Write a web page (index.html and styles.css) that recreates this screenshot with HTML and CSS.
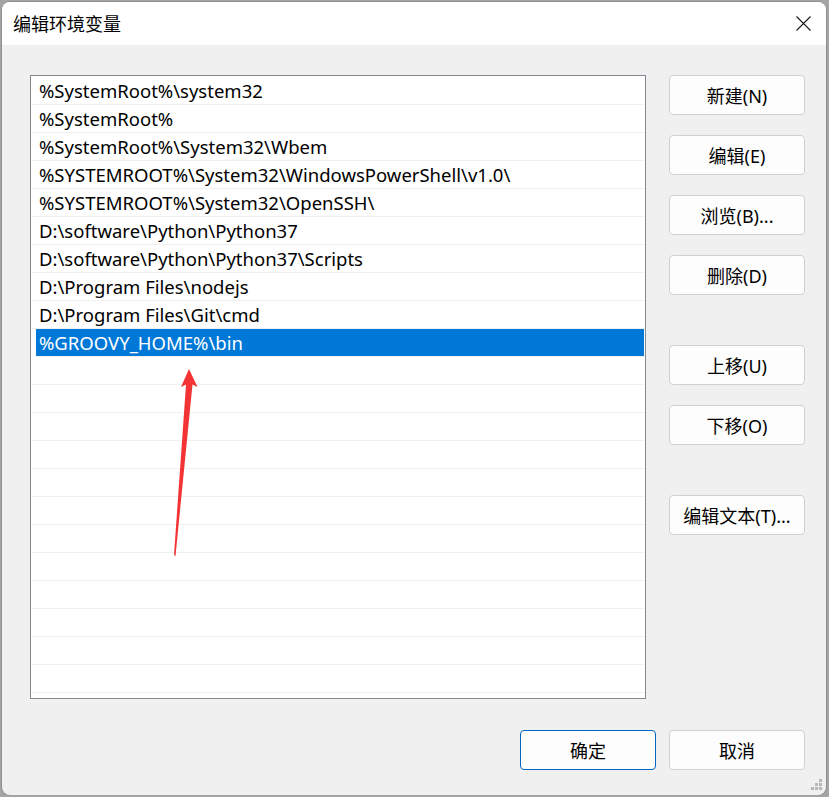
FILE: index.html
```html
<!DOCTYPE html>
<html lang="zh-CN">
<head>
    <meta charset="UTF-8">
    <title>编辑环境变量</title>
    <link rel="stylesheet" href="styles.css">
</head>
<body>
    <div class="window">
        <div class="titlebar">
            <span class="title">编辑环境变量</span>
            <button class="close-btn" aria-label="关闭">
                <svg width="15" height="15" viewBox="0 0 15 15">
                    <path d="M0.5 0.5 L14.5 14.5 M14.5 0.5 L0.5 14.5" stroke="#1a1a1a" stroke-width="1.1" fill="none"/>
                </svg>
            </button>
        </div>

        <div class="content">
            <div class="main">
                <div class="path-list">
                    <div class="row">%SystemRoot%\system32</div>
                    <div class="row">%SystemRoot%</div>
                    <div class="row">%SystemRoot%\System32\Wbem</div>
                    <div class="row">%SYSTEMROOT%\System32\WindowsPowerShell\v1.0\</div>
                    <div class="row">%SYSTEMROOT%\System32\OpenSSH\</div>
                    <div class="row">D:\software\Python\Python37</div>
                    <div class="row">D:\software\Python\Python37\Scripts</div>
                    <div class="row">D:\Program Files\nodejs</div>
                    <div class="row">D:\Program Files\Git\cmd</div>
                    <div class="row selected">%GROOVY_HOME%\bin</div>
                    <div class="row"></div>
                    <div class="row"></div>
                    <div class="row"></div>
                    <div class="row"></div>
                    <div class="row"></div>
                    <div class="row"></div>
                    <div class="row"></div>
                    <div class="row"></div>
                    <div class="row"></div>
                    <div class="row"></div>
                    <div class="row"></div>
                    <div class="row"></div>
                </div>

                <div class="side-buttons">
                    <button class="btn">新建(N)</button>
                    <button class="btn">编辑(E)</button>
                    <button class="btn">浏览(B)...</button>
                    <button class="btn">删除(D)</button>
                    <button class="btn group-start">上移(U)</button>
                    <button class="btn">下移(O)</button>
                    <button class="btn group-start">编辑文本(T)...</button>
                </div>
            </div>

            <div class="footer">
                <button class="btn btn-default">确定</button>
                <button class="btn">取消</button>
            </div>
        </div>

        <!-- red annotation arrow drawn over the list -->
        <svg class="arrow" width="824" height="793" viewBox="0 0 824 793">
            <polygon points="187,367 195.5,385 190.5,382.5 173.5,554 172,553 184,382.5 179,385" fill="#f43434"/>
        </svg>

        <svg class="grip" width="14" height="14" viewBox="0 0 14 14">
            <rect x="9" y="0" width="3" height="3" fill="#b8b8b8"/>
            <rect x="5" y="4" width="3" height="3" fill="#b8b8b8"/>
            <rect x="9" y="4" width="3" height="3" fill="#b8b8b8"/>
            <rect x="1" y="8" width="3" height="3" fill="#b8b8b8"/>
            <rect x="5" y="8" width="3" height="3" fill="#b8b8b8"/>
            <rect x="9" y="8" width="3" height="3" fill="#b8b8b8"/>
        </svg>
    </div>
</body>
</html>
```

FILE: styles.css
```css
body {
    margin: 0;
    background-color: #a4a4a4;
    font-family: "Noto Sans", "Noto Sans CJK SC", sans-serif;
    overflow: hidden;
}
.window {
    position: relative;
    margin: 2px 0 0 2px;
    width: 824px;
    height: 793px;
    background-color: #f0f0f0;
    border-radius: 8px;
    overflow: hidden;
    box-shadow: 0 0 0 1px rgba(0,0,0,0.12);
}
.titlebar {
    display: flex;
    align-items: center;
    height: 43px;
    background-color: #ffffff;
    padding-left: 11px;
}
.title {
    font-size: 18px;
    color: #000;
    margin-top: -2px;
}
.close-btn {
    margin-left: auto;
    width: 46px;
    height: 43px;
    border: none;
    background: transparent;
    display: flex;
    align-items: center;
    justify-content: center;
    padding: 0;
}
.content {
    padding: 30px 21px 25px 28px;
}
.main {
    display: flex;
    gap: 23px;
}
.path-list {
    width: 616px;
    height: 624px;
    box-sizing: border-box;
    border: 1px solid #828790;
    background-color: #fff;
    padding-top: 1px;
    overflow: hidden;
}
.row {
    height: 27px;
    line-height: 27px;
    margin: 0 1px;
    padding-left: 7px;
    border-bottom: 1px solid #f0f0f0;
    font-size: 18.5px;
    color: #000;
    white-space: nowrap;
}
.row.selected {
    margin-left: 5px;
    padding-left: 3px;
    background-color: #0078d7;
    color: #fff;
}
.side-buttons {
    display: flex;
    flex-direction: column;
    gap: 20px;
}
.btn {
    width: 136px;
    height: 40px;
    box-sizing: border-box;
    border: 1px solid #d0d0d0;
    border-radius: 4px;
    background-color: #fdfdfd;
    font-family: inherit;
    font-size: 18px;
    color: #000;
    padding: 0;
}
.group-start {
    margin-top: 30px;
}
.btn-default {
    border-color: #0067c0;
}
.footer {
    display: flex;
    justify-content: flex-end;
    gap: 13px;
    margin-top: 31px;
}
.arrow {
    position: absolute;
    left: 0;
    top: 0;
    pointer-events: none;
}
.grip {
    position: absolute;
    right: 2px;
    bottom: 2px;
}
```
